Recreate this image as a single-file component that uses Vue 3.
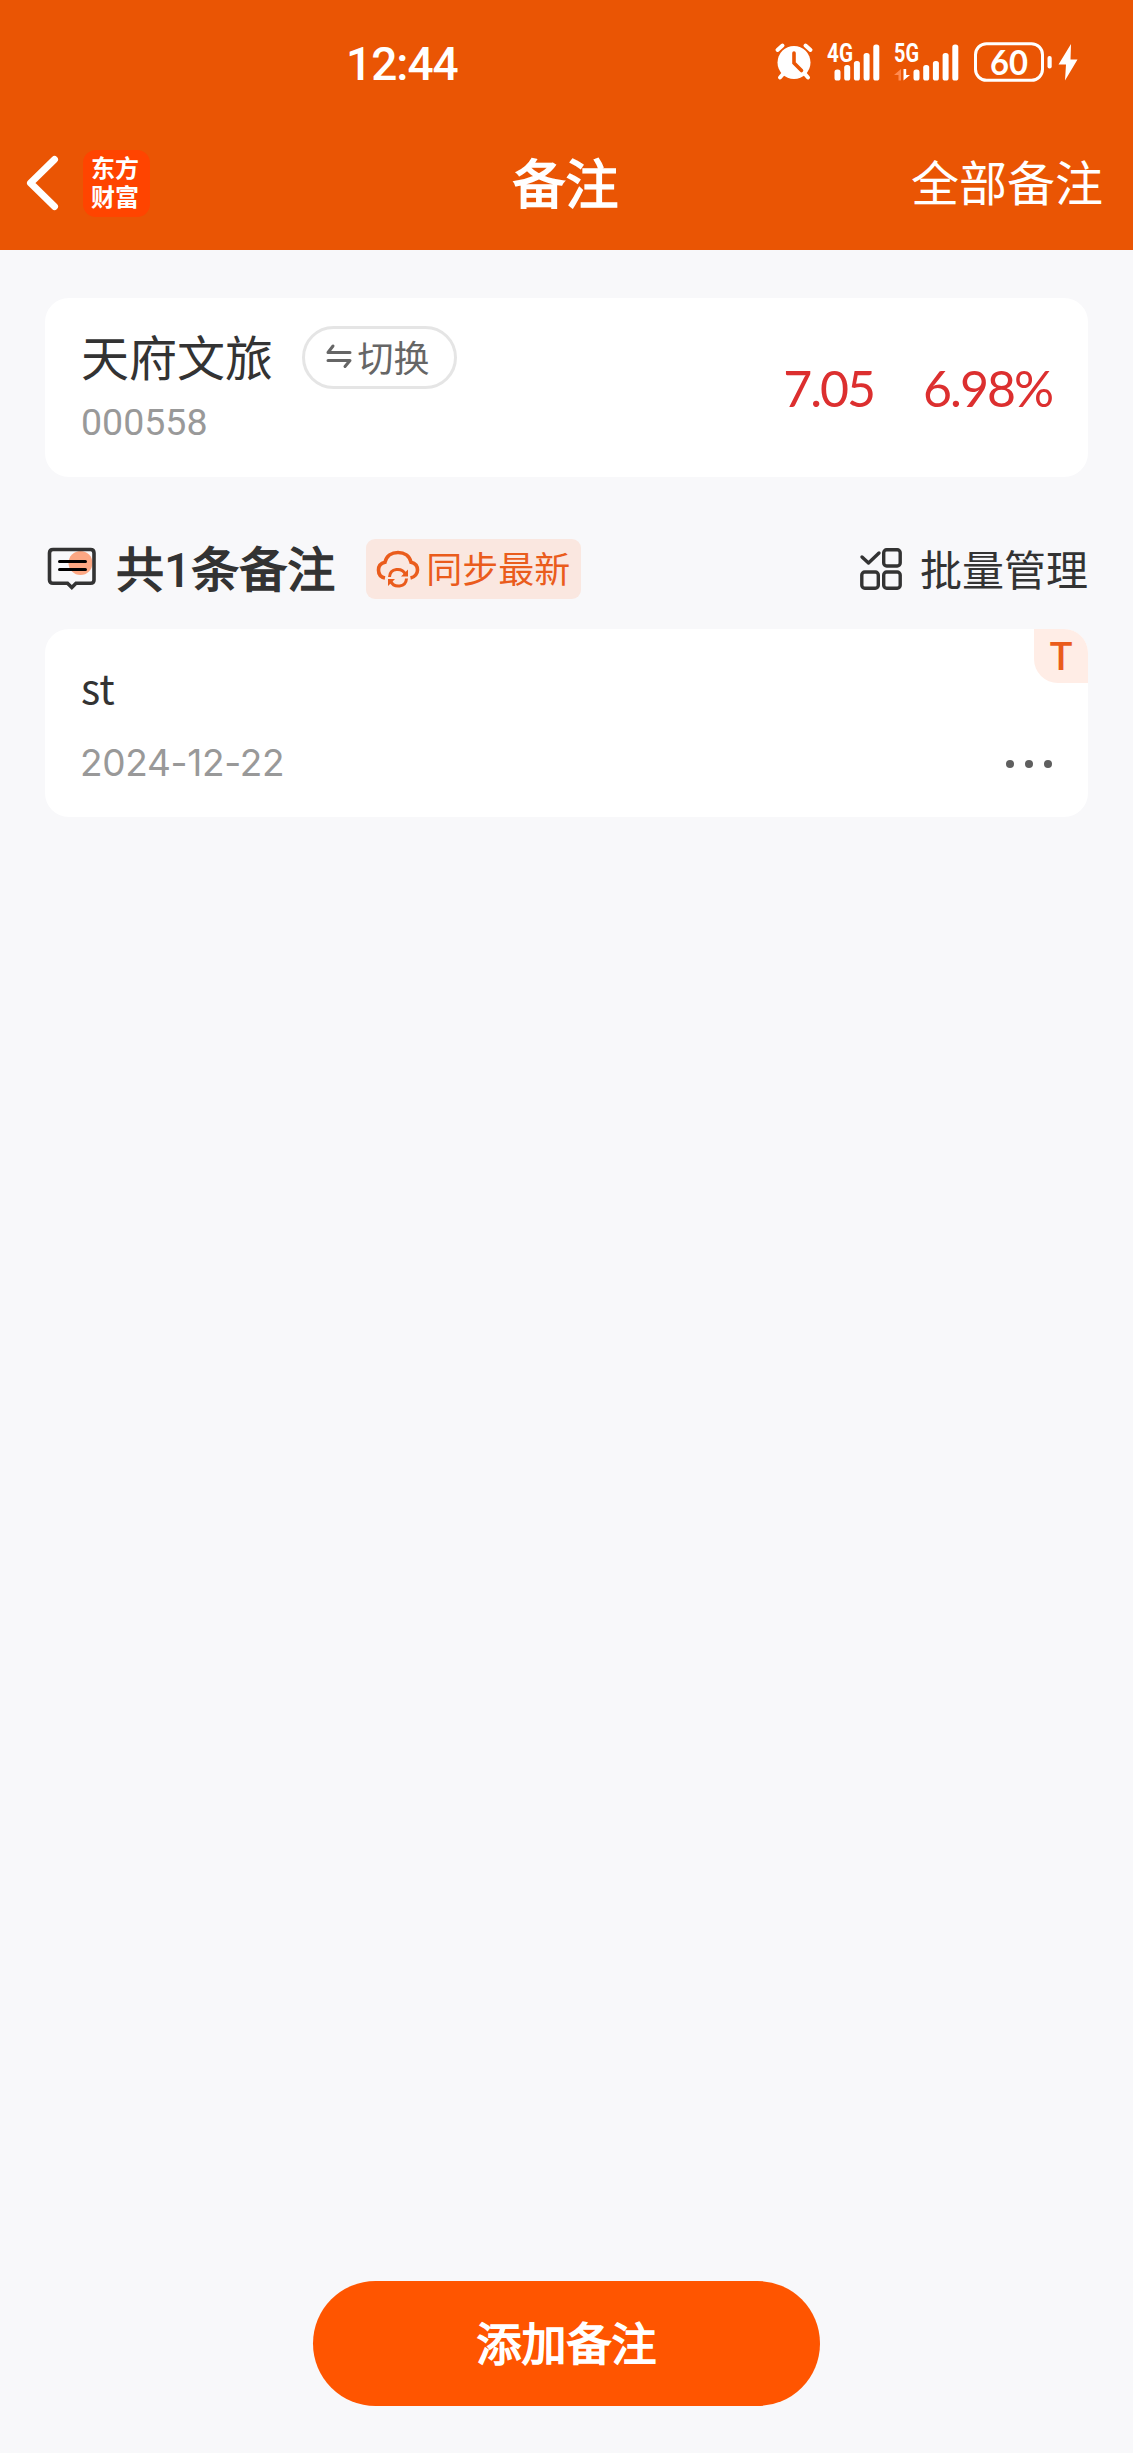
<template>
  <div class="page">
    <!-- 顶部区域 -->
    <header class="header">
      <!-- 状态栏 -->
      <div class="status-bar">
        <span class="clock">12:44</span>
        <div class="status-icons">
          <!-- 闹钟 -->
          <svg class="icon-alarm" viewBox="0 0 38 37" width="38" height="37">
            <g stroke="#fff" stroke-width="4" stroke-linecap="round">
              <path d="M2.5 7 7.5 2.5M35.5 7 30.5 2.5M8 31 5 34.5M30 31l3 3.5" />
            </g>
            <circle cx="19" cy="19.5" r="16.5" fill="#fff" />
            <path d="M19 10v10l7.5 7.5" fill="none" stroke="#ea5504" stroke-width="3.6" stroke-linecap="round" />
          </svg>
          <!-- 信号 -->
          <svg class="icon-signal" viewBox="0 0 53 37" width="53" height="37">
            <text class="net" x="0" y="18" textLength="26" lengthAdjust="spacingAndGlyphs">4G</text>
            <rect v-for="bar in bars" :key="bar.x" :x="bar.x - 1" :y="bar.y" width="6" :height="36.5 - bar.y" rx="2.6" fill="#fff" />
          </svg>
          <svg class="icon-signal" viewBox="0 0 66 37" width="66" height="37">
            <text class="net" x="0" y="18" textLength="25" lengthAdjust="spacingAndGlyphs">5G</text>
            <path d="M0 31 7 25v11.500H4.500V31Z" fill="#ff8a50" />
            <path d="M9.500 25v11.500L16 31H12.200V25Z" fill="#fff" />
            <rect v-for="bar in bars" :key="bar.x" :x="bar.x + 11" :y="bar.y" width="6" :height="36.5 - bar.y" rx="2.6" fill="#fff" />
          </svg>
          <!-- 电量 -->
          <svg class="icon-battery" viewBox="0 0 104 40" width="104" height="40">
            <rect x="1.500" y="1.700" width="67" height="36.600" rx="11" fill="none" stroke="#fff" stroke-width="3" />
            <text class="battery-text" x="16" y="32.500" textLength="38" lengthAdjust="spacingAndGlyphs">60</text>
            <rect x="73.500" y="14" width="4.200" height="12.500" rx="2" fill="#fff" />
            <path d="M97 2 84.500 22.500H92L91 38.500 103.500 17.500H96.500Z" fill="#fff" />
          </svg>
        </div>
      </div>

      <!-- 导航栏 -->
      <div class="nav-bar">
        <div class="nav-left">
          <svg class="icon-back" viewBox="0 0 32 54" width="32" height="54">
            <path d="M28.500 3.500 4.500 27l24 23.500" fill="none" stroke="#fff" stroke-width="7" stroke-linecap="round" stroke-linejoin="round" />
          </svg>
          <div class="logo">东方财富</div>
        </div>
        <h1 class="title">备注</h1>
        <a class="nav-link">全部备注</a>
      </div>
    </header>

    <main class="content">
      <!-- 股票信息 -->
      <section class="card stock">
        <div class="stock-info">
          <div class="stock-row">
            <span class="stock-name">{{ stock.name }}</span>
            <button class="switch-btn">
              <svg viewBox="0 0 26 26" width="26" height="26" fill="none" stroke="#666" stroke-width="3" stroke-linecap="round" stroke-linejoin="round">
                <path d="M24 9.500H2L7 3M2 17.500h22L19 23.500" />
              </svg>
              <span>切换</span>
            </button>
          </div>
          <span class="stock-code">{{ stock.code }}</span>
        </div>
        <div class="quote">
          <span>{{ stock.price }}</span>
          <span>{{ stock.change }}</span>
        </div>
      </section>

      <!-- 备注标题栏 -->
      <div class="toolbar">
        <svg class="icon-note" viewBox="0 0 50 44" width="50" height="44">
          <circle cx="33.500" cy="16" r="12" fill="#fca783" />
          <path d="M6 2.500H43.500Q47 2.500 47 6V33Q47 36.300 43.500 36.300H29L24.800 40.500 20.500 36.300H6Q2.500 36.300 2.500 33V6Q2.500 2.500 6 2.500Z" fill="none" stroke="#333" stroke-width="3.600" />
          <path d="M12.500 14.500h26M12.500 22.500h26" stroke="#000" stroke-width="3" stroke-linecap="round" />
        </svg>
        <h2 class="count">共<b>{{ notes.length }}</b>条备注</h2>
        <button class="sync-btn">
          <svg viewBox="0 0 44 38" width="44" height="38" fill="none" stroke="#ea5c1c" stroke-width="3.600">
            <path d="M9 28C4 27 2.500 23 2.500 20 2.500 15.500 5.500 13 9 12.200 10.500 6 15.500 2.500 22 2.500S33.500 6 35 12.200C38.500 13 41.500 15.500 41.500 20 41.500 23.500 39 27 34.500 28" />
            <path d="M13.500 27C14 18 26 17 29.500 24.500M30.500 28.500C30 37.500 18 38.500 14.500 31" stroke-width="3" />
            <path d="M32 19.500v7H25ZM12 36v-7H19Z" fill="#ea5c1c" stroke="none" />
          </svg>
          <span>同步最新</span>
        </button>
        <a class="manage">
          <svg viewBox="0 0 42 42" width="42" height="42" fill="none" stroke="#333" stroke-width="3.400" stroke-linecap="round" stroke-linejoin="round">
            <path d="M2 9 8.500 15 19 5" />
            <rect x="23.700" y="1.800" width="16.500" height="16.200" rx="3" />
            <rect x="1.800" y="24" width="16.500" height="16.200" rx="3" />
            <rect x="23.700" y="24" width="16.500" height="16.200" rx="3" />
          </svg>
          <span>批量管理</span>
        </a>
      </div>

      <!-- 备注列表 -->
      <article v-for="note in notes" :key="note.date" class="card note">
        <span class="tag">T</span>
        <p class="note-text">{{ note.text }}</p>
        <div class="note-footer">
          <time class="note-date">{{ note.date }}</time>
          <div class="more"><i></i><i></i><i></i></div>
        </div>
      </article>
    </main>

    <!-- 底部按钮 -->
    <footer class="footer">
      <button class="add-btn">添加备注</button>
    </footer>
  </div>
</template>

<script setup>
import { reactive, ref } from 'vue';

// 股票行情
const stock = reactive({
  name: '天府文旅',
  code: '000558',
  price: '7.05',
  change: '6.98%',
});

// 备注数据
const notes = ref([{ text: 'st', date: '2024-12-22' }]);

// 信号格
const bars = [
  { x: 8.5, y: 25.5 },
  { x: 18.2, y: 21 },
  { x: 27.9, y: 17 },
  { x: 37.6, y: 9 },
  { x: 47.3, y: 0.5 },
];
</script>

<style>
body {
  margin: 0;
  background: #f8f8fa;
}
</style>

<style scoped>
.page {
  height: 2453px;
  display: flex;
  flex-direction: column;
  background: #f8f8fa;
  color: #333;
  font-family: 'Noto Sans CJK SC', sans-serif;
}

.page svg {
  display: block;
  flex-shrink: 0;
  overflow: visible;
}

button {
  border: none;
  font-family: inherit;
}

.header {
  height: 250px;
  background: #ea5504;
  color: #fff;
}

.status-bar {
  height: 117px;
  box-sizing: border-box;
  padding: 42px 55px 0 346px;
  display: flex;
  align-items: flex-start;
  justify-content: space-between;
}

.clock {
  margin-top: 2px;
  font-family: Roboto, sans-serif;
  font-size: 46px;
  font-weight: 500;
  line-height: 40px;
  letter-spacing: -1px;
}

.status-icons {
  display: flex;
}

.icon-alarm {
  margin: 1px 14px 0 0;
}

.icon-signal {
  margin: 2px 14px 0 0;
}

.net {
  font-family: Roboto, sans-serif;
  font-size: 25px;
  font-weight: 700;
  fill: #fff;
}

.battery-text {
  font-family: Lato, sans-serif;
  font-size: 34px;
  font-weight: 700;
  fill: #fff;
}

.nav-bar {
  height: 133px;
  display: grid;
  grid-template-columns: 1fr auto 1fr;
  align-items: center;
  box-sizing: border-box;
  padding: 0 30px 1px 26px;
}

.nav-left {
  display: flex;
  align-items: center;
  gap: 25px;
}

.logo {
  width: 67px;
  height: 67px;
  box-sizing: border-box;
  padding: 2px 10px 7px 8px;
  border-radius: 13px;
  background: #ff4400;
  font-size: 24px;
  font-weight: 700;
  line-height: 29px;
}

.title {
  margin: 0 0 4px 2px;
  font-size: 53px;
  font-weight: 400;
  line-height: 70px;
  -webkit-text-stroke: 1.6px currentColor;
}

.nav-link {
  justify-self: end;
  margin-bottom: 7px;
  font-size: 48px;
  line-height: 70px;
}

.content {
  flex: 1;
  padding: 48px 45px 0;
}

.card {
  border-radius: 24px;
  background: #fff;
}

.stock {
  height: 179px;
  box-sizing: border-box;
  padding: 28px 36px 0 36px;
  display: flex;
  justify-content: space-between;
}

.stock-row {
  display: flex;
  align-items: center;
  gap: 29px;
}

.stock-name {
  margin-top: -4px;
  font-size: 48px;
  line-height: 63px;
}

.switch-btn {
  width: 155px;
  height: 63px;
  box-sizing: border-box;
  padding: 0 4px 3px 0;
  border: 3px solid #e5e5e5;
  border-radius: 32px;
  background: #fff;
  color: #666;
  display: flex;
  align-items: center;
  justify-content: center;
  gap: 6px;
  font-size: 36px;
  line-height: 50px;
}

.stock-code {
  display: block;
  margin-top: 8px;
  color: #999;
  font-family: Roboto, sans-serif;
  font-size: 37.5px;
  line-height: 50px;
}

.quote {
  display: flex;
  gap: 49px;
  margin-top: 37px;
  color: #dc2f2f;
  font-family: Lato, sans-serif;
  font-size: 50px;
  line-height: 50px;
  letter-spacing: -2px;
}

.toolbar {
  margin: 62px 0 30px;
  height: 60px;
  display: flex;
  align-items: center;
}

.icon-note {
  margin: 0 19px 0 2px;
}

.count {
  margin: 0 31px 2px 0;
  font-size: 48px;
  font-weight: 400;
  line-height: 60px;
  -webkit-text-stroke: 1.5px currentColor;
}

.count b {
  font-family: Roboto, sans-serif;
  font-weight: 500;
  -webkit-text-stroke: 0;
}

.sync-btn {
  width: 215px;
  height: 60px;
  padding: 0 0 0 10px;
  border-radius: 9px;
  background: #fae7e0;
  color: #ea5c1c;
  display: flex;
  align-items: center;
  gap: 6px;
  font-size: 36px;
  line-height: 56px;
}

.sync-btn span {
  margin-top: -4px;
}

.manage {
  margin-left: auto;
  display: flex;
  align-items: center;
  gap: 18px;
  font-size: 42px;
  line-height: 60px;
}

.manage span {
  margin-top: -3px;
}

.note {
  position: relative;
  height: 188px;
  box-sizing: border-box;
  padding: 30px 36px 0;
  overflow: hidden;
}

/* 右上角类型角标 */
.tag {
  position: absolute;
  top: 0;
  right: 0;
  width: 54px;
  height: 54px;
  border-bottom-left-radius: 24px;
  background: #ffede6;
  color: #ea5c1c;
  font-family: Roboto, sans-serif;
  font-size: 38px;
  font-weight: 500;
  line-height: 57px;
  text-align: center;
}

.note-text {
  margin: 0;
  font-size: 41px;
  line-height: 54px;
}

.note-footer {
  margin-top: 25px;
  display: flex;
  align-items: center;
  justify-content: space-between;
}

.note-date {
  margin: -2px 0 0 -1px;
  color: #999;
  font-family: Inter, sans-serif;
  font-size: 37px;
  line-height: 54px;
  letter-spacing: -0.3px;
}

.more {
  display: flex;
  gap: 11px;
}

.more i {
  width: 8px;
  height: 8px;
  border-radius: 50%;
  background: #5f5f5f;
}

.footer {
  display: flex;
  justify-content: center;
  padding-bottom: 47px;
}

.add-btn {
  width: 507px;
  height: 125px;
  padding: 0 0 4px;
  border-radius: 63px;
  background: #ff5500;
  color: #fff;
  font-size: 45px;
  font-weight: 400;
  -webkit-text-stroke: 1.6px currentColor;
}
</style>
